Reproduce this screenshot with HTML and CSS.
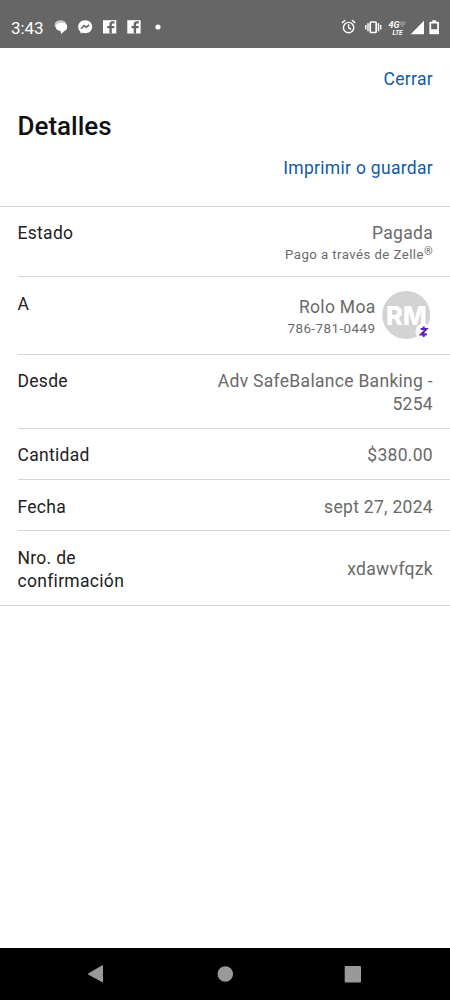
FILE: index.html
```html
<!DOCTYPE html>
<html lang="es">
<head>
<meta charset="utf-8">
<title>Detalles</title>
<link rel="stylesheet" href="styles.css">
</head>
<body>
<div class="screen">
  <div class="status">
    <span class="clock">3:43</span>
    <svg class="left-icons" width="112" height="18" viewBox="0 0 112 18">
      <ellipse cx="6.500" cy="6.700" rx="6" ry="4.500" fill="#c9c9c9"/>
      <path d="M7.500 4.800c3.500 0 5.700 1.500 5.700 4.100 0 2.400-1.500 3.800-3.200 4.400L7.300 16l-.8-2.900C3.600 12.400 1.800 11 1.800 8.900c0-2.600 2.200-4.100 5.700-4.100z" fill="#fff"/>
      <path d="M31.200 2.200c-4 0-7 2.800-7 6.500 0 2 .8 3.700 2.200 4.900l.2 2 2-.8c.8.3 1.700.4 2.600.4 4 0 7-2.800 7-6.500s-3-6.500-7-6.500z" fill="#fff"/>
      <path d="M27 10.800l3-3.300 2 1.700 3.300-2.200" fill="none" stroke="#666" stroke-width="1.600"/>
      <g id="fb"><path d="M49 2.200h13.300v13.300H49z" fill="#fff"/><path d="M57.800 15.500v-5.300h2.400l.3-2.300h-2.700V6.600c0-.8.400-1.200 1.200-1.200h1.500V3.300h-2c-2 0-3.100 1.200-3.100 3v1.600h-2.200v2.300h2.200v5.300z" fill="#666"/></g>
      <use href="#fb" x="24.300"/>
      <circle cx="104" cy="9" r="2.600" fill="#fff"/>
    </svg>
    <svg class="right-icons" width="100" height="18" viewBox="0 0 100 18">
      <g fill="none" stroke="#fff" stroke-width="1.400">
        <circle cx="8.600" cy="9.600" r="5.200"/><path d="M8.600 6.300v3.500l2.500 1.600M2 4.900l3.200-2.600M12 2.300l3.200 2.600"/>
        <rect x="30.200" y="4" width="6" height="10.500" rx="1" stroke-width="1.700"/>
        <path d="M28 5.200v8M38.500 5.200v8M25.800 7v4.400M40.700 7v4.400"/>
      </g>
      <path d="M58.500 4.500a8 8 0 0 1 8 0l-4 5z" fill="#8c8c8c"/>
      <text class="net" x="48.500" y="10">4G</text>
      <text class="lte" x="52.500" y="16.500">LTE</text>
      <path d="M70.700 16.200L84 2.700v13.500z" fill="#fff"/>
      <path d="M92.300 2.200h3.800v1.500h2.100q.8 0 .8.800v10.900q0 .8-.8.800h-8q-.8 0-.8-.8V4.500q0-.8.800-.8h2.100zM91.200 5.500v5.800h6V5.500z" fill="#fff" fill-rule="evenodd"/>
    </svg>
  </div>
  <header class="head">
    <a class="link">Cerrar</a>
    <h1 class="title">Detalles</h1>
    <a class="link print">Imprimir o guardar</a>
  </header>
  <main class="rows">
    <section class="row state"><span class="label">Estado</span><div class="value">Pagada<div class="sub">Pago a través de Zelle<span class="reg">®</span></div></div></section>
    <section class="row payee"><span class="label">A</span><div class="value">Rolo Moa<div class="sub phone">786-781-0449</div></div>
      <svg class="avatar" width="52" height="50" viewBox="0 0 52 50">
        <circle cx="24.200" cy="24" r="24" fill="#d3d3d3"/>
        <text class="initials" x="24.400" y="33.500" text-anchor="middle" textLength="41" lengthAdjust="spacingAndGlyphs">RM</text>
        <circle cx="41.500" cy="40.500" r="8" fill="#fff"/>
        <path d="M38.600 38h5.800l-5.300 5.400h5.700M41.700 35.500v2.300M41.700 43.400v2.500" fill="none" stroke="#6420b4" stroke-width="2.100"/>
      </svg>
    </section>
    <section class="row from"><span class="label">Desde</span><div class="value">Adv SafeBalance Banking -<br>5254</div></section>
    <section class="row amount"><span class="label">Cantidad</span><div class="value">$380.00</div></section>
    <section class="row date"><span class="label">Fecha</span><div class="value">sept 27, 2024</div></section>
    <section class="row confirm"><span class="label">Nro. de confirmación</span><div class="value">xdawvfqzk</div></section>
  </main>
  <nav class="nav">
    <svg width="450" height="52" viewBox="0 0 450 52" fill="#999">
      <path d="M88.500 25.300L102.300 17.300q.7-.3.700.5v16q0 .8-.7.500L88.500 26.700q-1-.7 0-1.400z"/>
      <circle cx="225.300" cy="26" r="7.800"/>
      <rect x="344.700" y="18" width="16.300" height="16.600" rx="1"/>
    </svg>
  </nav>
</div>
</body>
</html>
```
FILE: styles.css
```css
body { margin: 0; background: #fff; font-family: Roboto, "Liberation Sans", sans-serif; }
.screen { display: flex; flex-direction: column; width: 450px; height: 1000px; overflow: hidden; }
.status { display: flex; align-items: flex-start; height: 48px; box-sizing: border-box; padding: 18px 10px 0 11px; background: #666; color: #fff; }
.clock { width: 43px; font-size: 17px; line-height: 20px; letter-spacing: -.1px; white-space: nowrap; }
.left-icons { flex: none; }
.right-icons { flex: none; margin-left: auto; }
.net { font: italic bold 9px Roboto, sans-serif; fill: #fff; }
.lte { font: italic bold 6.500px Roboto, sans-serif; fill: #fff; }
.head { display: flex; flex-direction: column; height: 159px; box-sizing: border-box; padding: 19px 17px 0 17.500px; border-bottom: 1px solid #d6d6d6; }
.link { align-self: flex-end; color: #1259a8; font-size: 17.500px; line-height: 24px; letter-spacing: .3px; }
.title { margin: 19px 0 0; font-size: 26px; font-weight: 500; line-height: 32px; color: #111; }
.print { margin-top: 14px; }
.rows { border-bottom: 1px solid #d6d6d6; }
.row { display: flex; align-items: flex-start; box-sizing: border-box; margin-left: 17.500px; padding: 15px 17px 0 0; border-bottom: 1px solid #d6d6d6; font-size: 17.500px; line-height: 23px; letter-spacing: .3px; }
.label { width: 130px; color: #222; }
.value { flex: 1; color: #6a6a6a; text-align: right; white-space: nowrap; }
.sub { font-size: 13.200px; line-height: 20px; letter-spacing: .45px; }
.reg { font-size: 11px; line-height: 0; vertical-align: 4px; }
.state { height: 70px; }
.payee { height: 78px; }
.payee .label { padding-top: 1px; }
.payee .value { padding-top: 4px; }
.phone { font-size: 13.400px; }
.avatar { flex: none; margin: -1px -.5px 0 6px; }
.initials { font: 800 26px Inter, sans-serif; letter-spacing: 0; fill: #fff; }
.from { height: 74px; }
.amount { height: 51px; }
.date { height: 51px; padding-top: 16px; }
.confirm { height: 74px; padding-top: 16px; border-bottom: 0; }
.confirm .value { padding-top: 11px; }
.nav { margin-top: auto; height: 52px; background: #000; }
.nav svg { display: block; }
```
